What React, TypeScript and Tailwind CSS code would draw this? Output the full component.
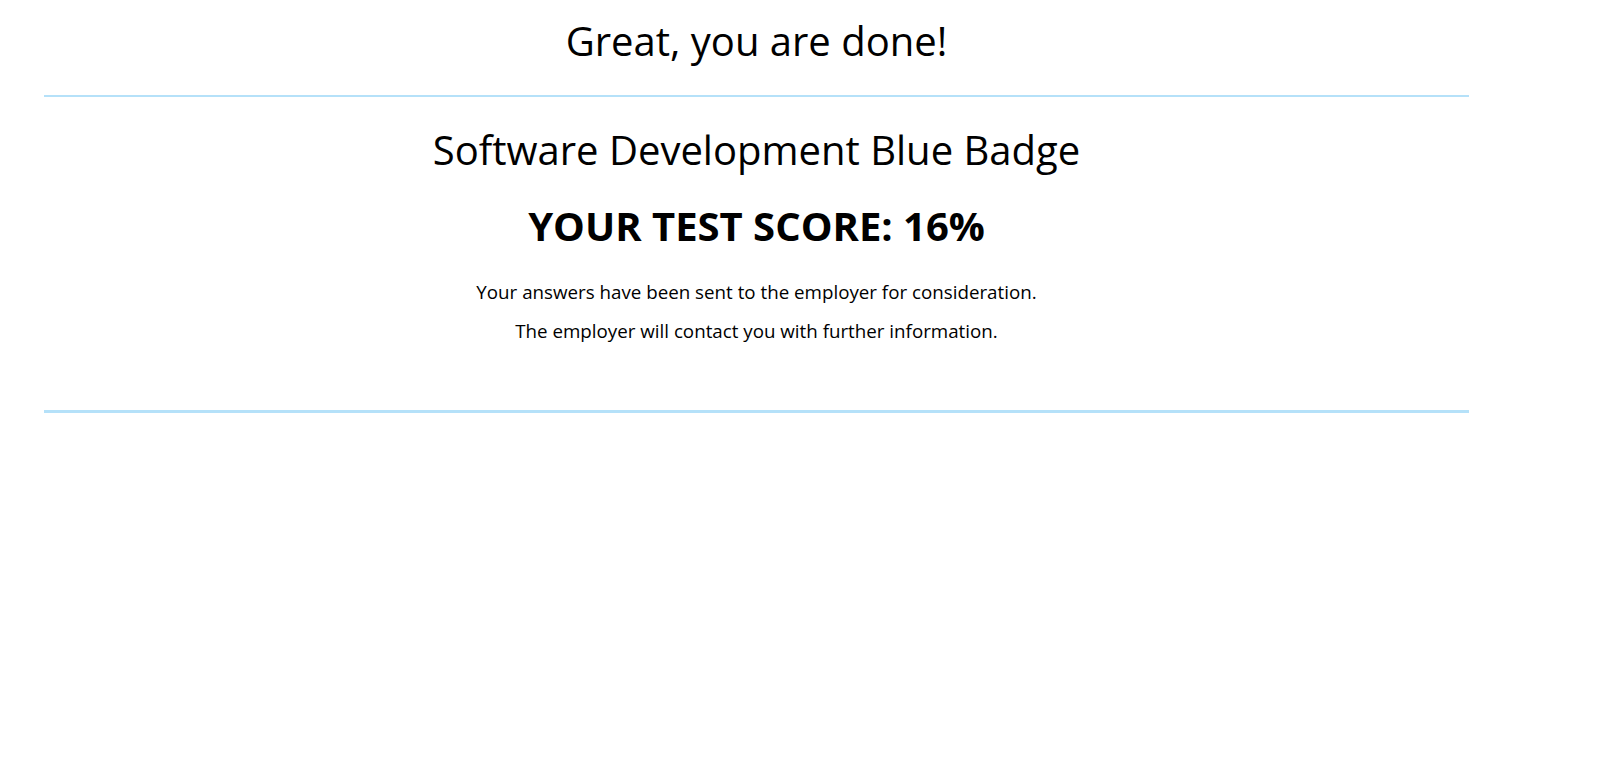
export default function App() {
  return (
    <div className="min-h-screen bg-white text-black" style={{ fontFamily: '"Open Sans", "Noto Sans", sans-serif' }}>
      <div className="ml-[44px] w-[1425px]">
        <div className="border-b-2 border-[#b5e1f9] pt-[17px] pb-[30px] text-center">
          <h1 className="text-[40px] leading-[48px] font-normal">Great, you are done!</h1>
        </div>
        <div className="border-b-[3px] border-[#b5e1f9] pt-[29px] pb-[66px] text-center">
          <h2 className="text-[40px] leading-[48px] font-normal">Software Development Blue Badge</h2>
          <h3 className="mt-[28px] text-[40px] leading-[48px] font-bold">YOUR TEST SCORE: 16%</h3>
          <p className="mt-[29px] text-[18.75px] leading-[26px]">Your answers have been sent to the employer for consideration.</p>
          <p className="mt-[13px] text-[18.75px] leading-[26px]">The employer will contact you with further information.</p>
        </div>
      </div>
    </div>
  );
}
